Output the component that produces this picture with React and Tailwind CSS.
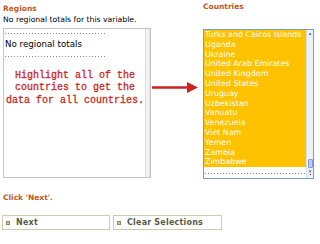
const countries = [
  'Turks and Caicos Islands',
  'Uganda',
  'Ukraine',
  'United Arab Emirates',
  'United Kingdom',
  'United States',
  'Uruguay',
  'Uzbekistan',
  'Vanuatu',
  'Venezuela',
  'Viet Nam',
  'Yemen',
  'Zambia',
  'Zimbabwe',
]

function Dots({ className = '' }) {
  return (
    <div
      className={`h-[1px] bg-[linear-gradient(to_right,#8a8a8a_1px,transparent_1px)] bg-[length:3px_1px] ${className}`}
    />
  )
}

function Heading({ children, className = '' }) {
  return (
    <div className={`text-[7.5px] leading-[11px] h-[11px] font-bold text-[#c5561a] ${className}`}>
      {children}
    </div>
  )
}

function ButtonBox({ label, width }) {
  return (
    <div className={`${width} h-[15px] border border-[#cbcea8] bg-white flex items-center pl-[3px] gap-[6px]`}>
      <span className="w-[4px] h-[4px] border border-[#8f8f63] bg-[#c2c29a]" />
      <span className="text-[8px] font-bold tracking-[0.2px] text-[#5a5a46] leading-none">{label}</span>
    </div>
  )
}

export default function App() {
  return (
    <div className="w-[320px] h-[244px] bg-white overflow-hidden font-['DejaVu_Sans',sans-serif] text-black">
      <div className="flex">
        {/* Regions */}
        <div className="ml-[3px] w-[148px] pt-[3px]">
          <Heading>Regions</Heading>
          <div className="text-[7.7px] leading-[11px] h-[11px]">No regional totals for this variable.</div>
          <div className="mt-[3px] h-[150px] border border-[#c4c4c4] flex">
            <div className="flex-1 pl-[1px]">
              <Dots className="w-[100px] mt-[4px]" />
              <div className="text-[8.7px] leading-[10px] mt-[5px]">No regional totals</div>
              <Dots className="w-[100px] mt-[7px]" />
              <div className="mt-[13px] text-center font-['Liberation_Mono',monospace] text-[10px] leading-[12.3px] text-[#c92a24] [-webkit-text-stroke:0.3px_#c92a24]">
                Highlight all of the
                <br />
                countries to get the
                <br />
                data for all countries.
              </div>
            </div>
            <div className="w-[5px] border-l border-[#dcdcdc] bg-[#f3f3f3] border-r border-r-[#e4e4e4]" />
          </div>
        </div>

        {/* arrow */}
        <div className="w-[52px] pt-[82px] pl-[1px]">
          <svg width="46" height="11" viewBox="0 0 46 11">
            <rect x="0" y="4.25" width="37" height="2.5" fill="#cc2222" />
            <polygon points="35,0 46,5.5 35,11" fill="#cc2222" />
          </svg>
        </div>

        {/* Countries */}
        <div className="w-[111px] pt-[1px]">
          <Heading>Countries</Heading>
          <div className="mt-[17px] h-[150px] border border-[#7f9db9] flex">
            <div className="flex-1 flex flex-col">
              <div className="bg-[#ffc200]">
                {countries.map((c) => (
                  <div key={c} className="h-[9.8px] leading-[9.8px] text-[7.9px] text-white pl-[1px] whitespace-nowrap">
                    {c}
                  </div>
                ))}
              </div>
              <Dots className="mx-[1px] mt-[6px]" />
            </div>
            <div className="w-[7px] bg-[#eef2f8] border-l border-[#d6dfec] flex flex-col items-center">
              <div className="mt-[1px] text-[5px] leading-[5px] text-[#4d6185]">▴</div>
              <div className="flex-1" />
              <div className="w-[5px] h-[9px] bg-[#b7cdf3] border border-[#7f9bd0] rounded-[1px]" />
              <div className="mt-[1px] text-[5px] leading-[5px] text-[#4d6185]">▾</div>
              <div className="mb-[3px] w-[1px] h-[1px] bg-[#333]" />
            </div>
          </div>
        </div>
      </div>

      <Heading className="ml-[3px] mt-[13px]">Click 'Next'.</Heading>

      <div className="flex gap-[3px] ml-[2px] mt-[12px]">
        <ButtonBox label="Next" width="w-[108px]" />
        <ButtonBox label="Clear Selections" width="w-[109px]" />
      </div>
    </div>
  )
}
